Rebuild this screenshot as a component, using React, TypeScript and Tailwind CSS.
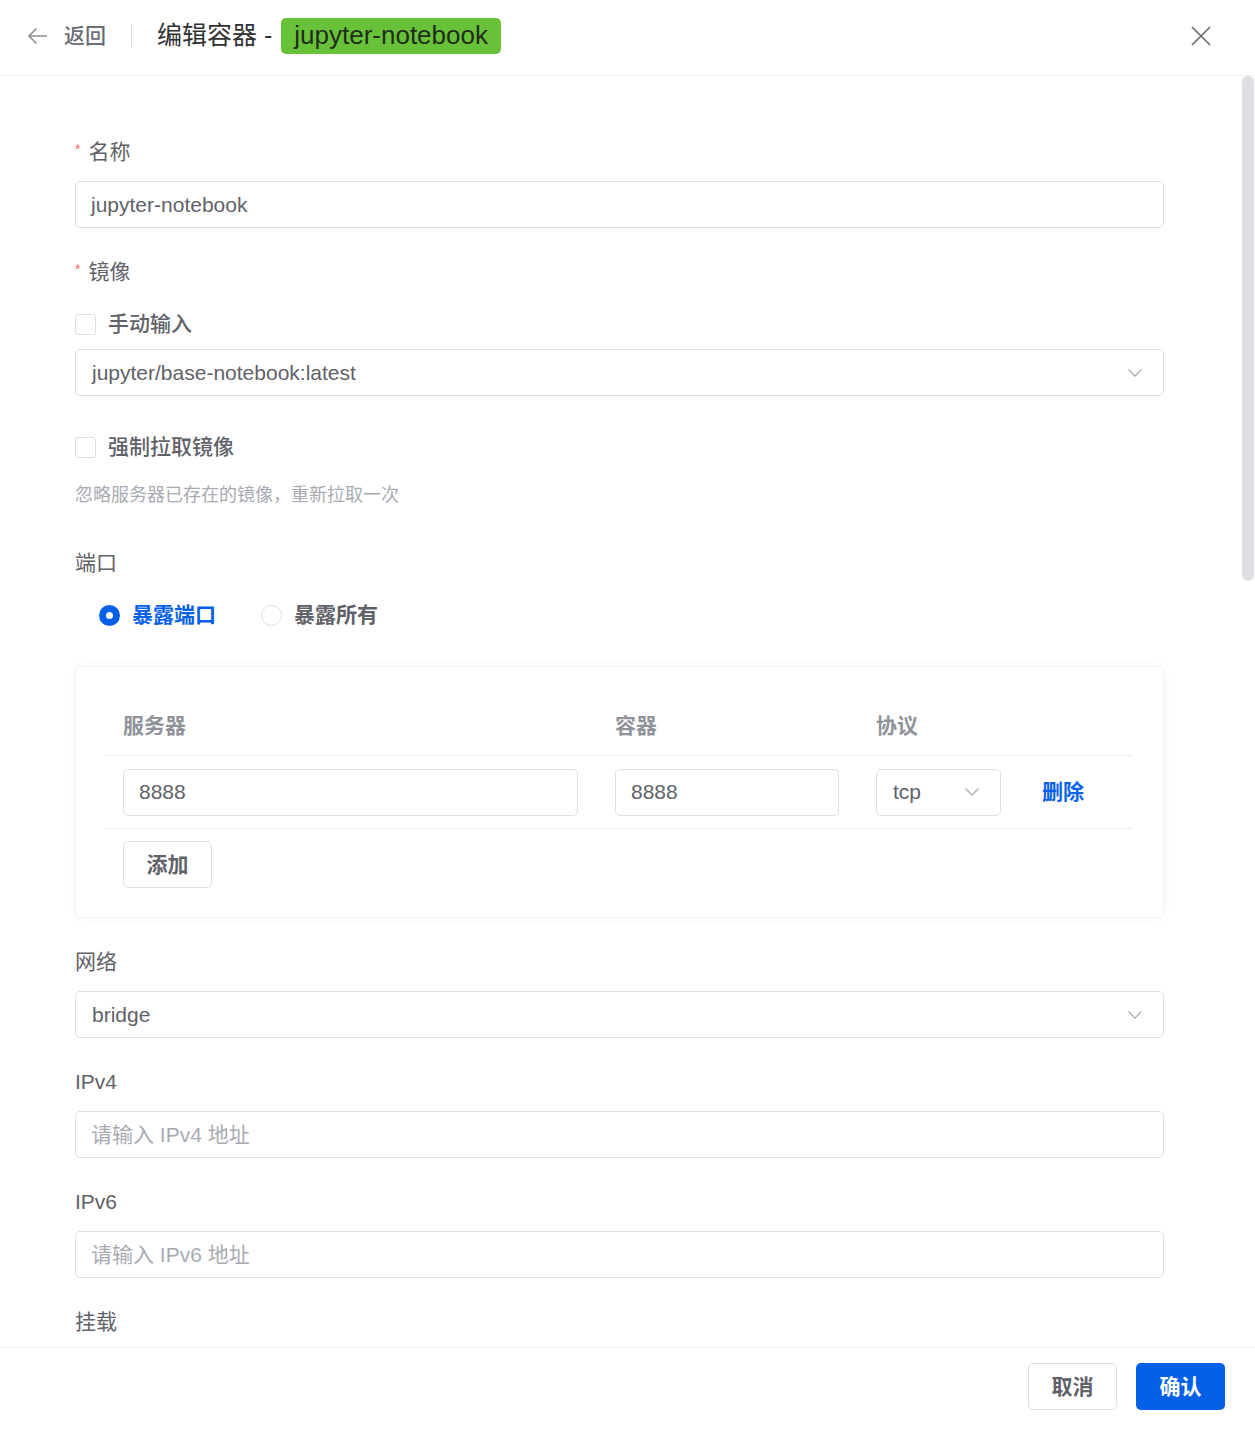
import React from 'react'

const font = { fontFamily: '"Liberation Sans", "Noto Sans CJK SC", sans-serif' }

function Chevron() {
  return (
    <svg width="16" height="10" viewBox="0 0 16 10" fill="none">
      <path d="M1.5 1.5 L8 8 L14.5 1.5" stroke="#a8abb2" strokeWidth="1.3" />
    </svg>
  )
}

function Label({ children, required }: { children: React.ReactNode; required?: boolean }) {
  return (
    <div className="flex h-[30px] items-center text-[21px] text-[#5f6268]">
      {required && <span className="mr-[8px] text-[14px] text-[#f56c6c] -mt-[6px]">*</span>}
      {children}
    </div>
  )
}

function Input({ value, placeholder, className = '' }: { value?: string; placeholder?: string; className?: string }) {
  return (
    <div
      className={`flex h-[47px] items-center rounded-[5px] border border-[#dcdfe6] bg-white px-[15px] text-[21px] ${className}`}
    >
      {value ? (
        <span className="text-[#5f6268]">{value}</span>
      ) : (
        <span className="text-[#a8abb2]">{placeholder}</span>
      )}
    </div>
  )
}

function Select({ value, className = '' }: { value: string; className?: string }) {
  return (
    <div
      className={`flex h-[47px] items-center justify-between rounded-[5px] border border-[#dcdfe6] bg-white pl-[16px] pr-[20px] text-[21px] text-[#5f6268] ${className}`}
    >
      <span>{value}</span>
      <Chevron />
    </div>
  )
}

function Checkbox({ label }: { label: string }) {
  return (
    <div className="flex h-[30px] items-center gap-[12px]">
      <span className="h-[21px] w-[21px] rounded-[3px] border border-[#dcdfe6] bg-white" />
      <span className="text-[21px] font-medium text-[#5f6268]">{label}</span>
    </div>
  )
}

export default function App() {
  return (
    <div className="flex h-[1438px] w-[1255px] flex-col bg-white" style={font}>
      {/* header */}
      <div className="flex h-[76px] shrink-0 items-center border-b border-[#ebeef5] pb-[4px] pl-[27px] pr-[44px]">
        <svg width="21" height="18" viewBox="0 0 21 18" fill="none">
          <path d="M20 9 H2 M9.5 1.5 L2 9 L9.5 16.5" stroke="#8d9097" strokeWidth="1.6" />
        </svg>
        <span className="ml-[16px] text-[21px] font-medium text-[#6a6d73]">返回</span>
        <span className="ml-[25px] h-[23px] w-px bg-[#dcdfe6]" />
        <span className="ml-[25px] text-[25px] text-[#303133]">编辑容器 -</span>
        <span className="ml-[9px] flex h-[36px] items-center rounded-[5px] bg-[#67c23a] px-[13px] text-[26px] text-[#1f2d1a]">
          jupyter-notebook
        </span>
        <svg className="ml-auto" width="20" height="20" viewBox="0 0 20 20" fill="none">
          <path d="M1 1 L19 19 M19 1 L1 19" stroke="#6a6d73" strokeWidth="1.7" />
        </svg>
      </div>

      {/* body */}
      <div className="relative flex-1 overflow-hidden">
        <div className="absolute right-[1px] top-0 h-[505px] w-[12px] rounded-full bg-[#dddee1]" />
        <div className="w-[1164px] pl-[75px] pt-[61px]">
          <Label required>名称</Label>
          <Input className="mt-[14px]" value="jupyter-notebook" />

          <div className="mt-[29px]">
            <Label required>镜像</Label>
          </div>
          <div className="mt-[22px]">
            <Checkbox label="手动输入" />
          </div>
          <Select className="mt-[10px]" value="jupyter/base-notebook:latest" />

          <div className="mt-[36px]">
            <Checkbox label="强制拉取镜像" />
          </div>
          <div className="mt-[21px] h-[24px] text-[18px] leading-[24px] text-[#a8abb2]">
            忽略服务器已存在的镜像，重新拉取一次
          </div>

          <div className="mt-[41px]">
            <Label>端口</Label>
          </div>
          <div className="mt-[22px] flex h-[30px] items-center pl-[24px]">
            <span className="flex h-[21px] w-[21px] items-center justify-center rounded-full bg-[#0560e8]">
              <span className="h-[7px] w-[7px] rounded-full bg-white" />
            </span>
            <span className="ml-[12px] text-[21px] font-semibold text-[#0560e8]">暴露端口</span>
            <span className="ml-[45px] h-[21px] w-[21px] rounded-full border border-[#dcdfe6] bg-white" />
            <span className="ml-[12px] text-[21px] font-semibold text-[#5f6268]">暴露所有</span>
          </div>

          {/* ports card */}
          <div className="mt-[36px] rounded-[6px] border border-[#f2f4f7] bg-white pb-[29px] pl-[28px] pr-[30px] pt-[29px] shadow-[0_0_10px_rgba(0,0,0,0.04)]">
            <div className="grid grid-cols-[492px_261px_166px_1fr] border-b border-[#ebeef5]">
              <div className="flex h-[59px] items-center pl-[19px] text-[21px] font-semibold text-[#909399]">服务器</div>
              <div className="flex h-[59px] items-center pl-[19px] text-[21px] font-semibold text-[#909399]">容器</div>
              <div className="flex h-[59px] items-center pl-[19px] text-[21px] font-semibold text-[#909399]">协议</div>
              <div />
            </div>
            <div className="grid h-[73px] grid-cols-[492px_261px_166px_1fr] items-center border-b border-[#ebeef5]">
              <div className="pl-[19px] pr-[18px]">
                <Input value="8888" />
              </div>
              <div className="pl-[19px] pr-[18px]">
                <Input value="8888" />
              </div>
              <div className="pl-[19px] pr-[22px]">
                <Select value="tcp" />
              </div>
              <div className="pl-[19px] text-[21px] font-semibold text-[#0560e8]">删除</div>
            </div>
            <div className="mt-[12px] pl-[19px]">
              <button className="h-[47px] w-[89px] rounded-[5px] border border-[#dcdfe6] bg-white text-[21px] font-semibold text-[#5f6268]">
                添加
              </button>
            </div>
          </div>

          <div className="mt-[29px]">
            <Label>网络</Label>
          </div>
          <Select className="mt-[14px]" value="bridge" />

          <div className="mt-[29px]">
            <Label>IPv4</Label>
          </div>
          <Input className="mt-[14px]" placeholder="请输入 IPv4 地址" />

          <div className="mt-[29px]">
            <Label>IPv6</Label>
          </div>
          <Input className="mt-[14px]" placeholder="请输入 IPv6 地址" />

          <div className="mt-[29px]">
            <Label>挂载</Label>
          </div>
        </div>
      </div>

      {/* footer */}
      <div className="flex h-[91px] shrink-0 items-start justify-end gap-[19px] border-t border-[#ebeef5] pr-[30px] pt-[15px]">
        <button className="h-[47px] w-[89px] rounded-[5px] border border-[#dcdfe6] bg-white text-[21px] font-semibold text-[#5f6268]">
          取消
        </button>
        <button className="h-[47px] w-[89px] rounded-[5px] bg-[#0560e8] text-[21px] font-semibold text-white">
          确认
        </button>
      </div>
    </div>
  )
}
